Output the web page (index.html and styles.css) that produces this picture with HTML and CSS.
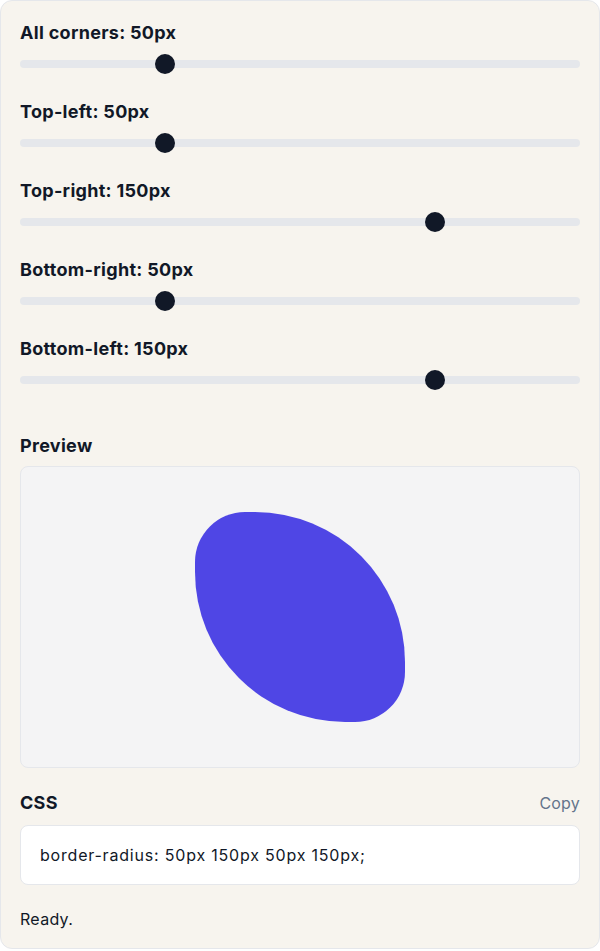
FILE: index.html
```html
<!DOCTYPE html>
<html lang="en">
<head>
<meta charset="utf-8">
<title>Border radius</title>
<link rel="stylesheet" href="styles.css">
</head>
<body>
<div class="card">
  <div class="field">
    <label class="label" for="all">All corners: 50px</label>
    <input class="range" id="all" type="range" min="0" max="200" value="50">
  </div>
  <div class="field">
    <label class="label" for="tl">Top-left: 50px</label>
    <input class="range" id="tl" type="range" min="0" max="200" value="50">
  </div>
  <div class="field">
    <label class="label" for="tr">Top-right: 150px</label>
    <input class="range" id="tr" type="range" min="0" max="200" value="150">
  </div>
  <div class="field">
    <label class="label" for="br">Bottom-right: 50px</label>
    <input class="range" id="br" type="range" min="0" max="200" value="50">
  </div>
  <div class="field">
    <label class="label" for="bl">Bottom-left: 150px</label>
    <input class="range" id="bl" type="range" min="0" max="200" value="150">
  </div>

  <div class="section preview-section">
    <div class="label">Preview</div>
    <div class="preview">
      <div class="shape"></div>
    </div>
  </div>

  <div class="section css-section">
    <div class="css-head">
      <div class="label">CSS</div>
      <button class="copy" type="button">Copy</button>
    </div>
    <div class="code">border-radius: 50px 150px 50px 150px;</div>
  </div>

  <div class="status">Ready.</div>
</div>
</body>
</html>
```
FILE: styles.css
```css
* { box-sizing: border-box; }
html, body { margin: 0; padding: 0; background: #ffffff; }
body {
  font-family: Inter, "Noto Sans", "Liberation Sans", sans-serif;
  color: #111827;
}
.card {
  width: 600px;
  height: 949px;
  background: #f7f4ee;
  border: 1px solid #e5e7eb;
  border-radius: 12px;
  padding: 20px 19px 20px 19px;
  display: flex;
  flex-direction: column;
}
.field {
  display: flex;
  flex-direction: column;
  gap: 9px;
  margin-bottom: 26px;
}
.label {
  display: block;
  font-size: 18px;
  font-weight: 700;
  line-height: 24px;
  letter-spacing: 0.3px;
  color: #111827;
}
.range {
  -webkit-appearance: none;
  appearance: none;
  width: 100%;
  height: 20px;
  margin: 0;
  background: transparent;
  display: block;
}
.range::-webkit-slider-runnable-track {
  height: 8px;
  border-radius: 4px;
  background: #e5e7eb;
}
.range::-webkit-slider-thumb {
  -webkit-appearance: none;
  appearance: none;
  width: 20px;
  height: 20px;
  border-radius: 50%;
  background: #111827;
  border: none;
  margin-top: -6px;
}
.range::-moz-range-track {
  height: 8px;
  border-radius: 4px;
  background: #e5e7eb;
}
.range::-moz-range-thumb {
  width: 20px;
  height: 20px;
  border-radius: 50%;
  background: #111827;
  border: none;
}
.preview-section {
  margin-top: 18px;
  display: flex;
  flex-direction: column;
  gap: 8px;
}
.preview {
  height: 302px;
  background: #f4f4f5;
  border: 1px solid #e5e7eb;
  border-radius: 8px;
  display: flex;
  align-items: center;
  justify-content: center;
}
.shape {
  width: 210px;
  height: 210px;
  background: #4f46e5;
  border-radius: 50px 150px 50px 150px;
}
.css-section {
  margin-top: 23px;
  display: flex;
  flex-direction: column;
  gap: 10px;
}
.css-head {
  display: flex;
  justify-content: space-between;
  align-items: center;
}
.copy {
  background: none;
  border: none;
  padding: 0;
  font-family: inherit;
  font-size: 16px;
  line-height: 24px;
  letter-spacing: 0.2px;
  color: #64748b;
  cursor: pointer;
}
.code {
  background: #ffffff;
  border: 1px solid #e5e7eb;
  border-radius: 8px;
  padding: 19px 19px;
  font-size: 16px;
  line-height: 20px;
  letter-spacing: 0.8px;
  color: #111827;
}
.status {
  margin-top: 22px;
  font-size: 16px;
  line-height: 24px;
  letter-spacing: 0.3px;
  color: #111827;
}
```
